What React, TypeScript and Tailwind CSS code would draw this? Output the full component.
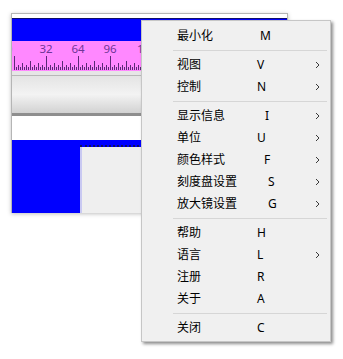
import React from "react";

type Item =
  | { sep: true }
  | { sep?: false; l: string; k: string; off: string; sub?: boolean };

const items: Item[] = [
  { l: "最小化", k: "M", off: "ml-[3px]" },
  { sep: true },
  { l: "视图", k: "V", off: "ml-0", sub: true },
  { l: "控制", k: "N", off: "ml-0", sub: true },
  { sep: true },
  { l: "显示信息", k: "I", off: "ml-[8px]", sub: true },
  { l: "单位", k: "U", off: "ml-0", sub: true },
  { l: "颜色样式", k: "F", off: "ml-[7px]", sub: true },
  { l: "刻度盘设置", k: "S", off: "ml-[11px]", sub: true },
  { l: "放大镜设置", k: "G", off: "ml-[11px]", sub: true },
  { sep: true },
  { l: "帮助", k: "H", off: "ml-0" },
  { l: "语言", k: "L", off: "ml-0", sub: true },
  { l: "注册", k: "R", off: "ml-0" },
  { l: "关于", k: "A", off: "ml-0" },
  { sep: true },
  { l: "关闭", k: "C", off: "ml-0" },
];

function Ruler() {
  const ticks: React.ReactNode[] = [];
  for (let u = 0; u <= 270; u += 2) {
    const x = 2 + u + 0.5;
    let h = 3;
    if (u % 32 === 0) h = 14;
    else if (u % 16 === 0) h = 9;
    else if (u % 8 === 0) h = 7;
    else if (u % 4 === 0) h = 5;
    ticks.push(
      <line key={u} x1={x} x2={x} y1={29} y2={29 - h} stroke="#5b2a78" strokeWidth={1} />
    );
  }
  const labels = [0, 32, 64, 96, 128];
  return (
    <svg width="276" height="30" className="block">
      <rect width="276" height="30" fill="#ff88ff" />
      {ticks}
      {labels.map((v) => (
        <text
          key={v}
          x={v === 0 ? -3 : v === 128 ? 125 : 2 + v}
          y={11.5}
          textAnchor={v === 128 ? "start" : "middle"}
          fontSize="11.5"
          fontFamily="'Noto Sans', 'Liberation Sans', sans-serif"
          fill="#6f3596"
        >
          {v}
        </text>
      ))}
    </svg>
  );
}

export default function App() {
  return (
    <div className="relative w-[343px] h-[359px] bg-white overflow-hidden font-['Noto_Sans','Noto_Sans_CJK_SC',sans-serif]">
      {/* background app window */}
      <div className="ml-[11px] mt-[13px] w-[277px] border-l border-t border-r border-[#b5b5b5] bg-white shadow-[0_1px_4px_rgba(0,0,0,0.25)] flex flex-col">
        <div className="h-[4px] bg-white" />
        <div className="h-px bg-[#10106a]" />
        <div className="h-[22px] bg-[#0000ff]" />
        <Ruler />
        <div className="h-[4px] bg-[#e6e6e6]" />
        <div className="h-px bg-[#b8b8b8]" />
        <div className="h-[37px] bg-gradient-to-b from-[#e4e4e4] via-[#f3f3f3] to-[#d2d2d2]" />
        <div className="h-[3px] bg-[#8e8e8e]" />
        <div className="h-[24px] bg-white" />
        <div className="h-[73px] bg-[#0000ff] flex">
          <div className="w-[68px]" />
          <div className="flex-1 flex flex-col">
            <div className="h-[7px] border-b-2 border-dotted border-[#101060]" />
            <div className="flex-1 bg-[#efefef] border-l-2 border-[#c9c9f2]" />
          </div>
        </div>
      </div>

      {/* context menu */}
      <div className="absolute left-[141px] top-[20px] w-[190px] bg-[#f0f0f0] border border-[#c6c6c6] shadow-[2px_2px_3px_rgba(0,0,0,0.45)] pt-[4px] pb-[2px] text-[12px] text-black">
        {items.map((it, i) =>
          it.sep ? (
            <div key={i} className="h-[7px] flex items-center pl-[31px] pr-[3px]">
              <div className="flex-1 h-px bg-[#d6d6d6]" />
            </div>
          ) : (
            <div key={i} className="h-[22px] flex items-center pl-[35px] pr-[10px] leading-none">
              <span className="w-[80px] shrink-0">{it.l}</span>
              <span className={it.off}>{it.k}</span>
              {it.sub && (
                <svg width="5" height="8" className="ml-auto" viewBox="0 0 5 8">
                  <path d="M1 1 L4 4 L1 7" fill="none" stroke="#3a3a3a" strokeWidth="1" />
                </svg>
              )}
            </div>
          )
        )}
      </div>
    </div>
  );
}
